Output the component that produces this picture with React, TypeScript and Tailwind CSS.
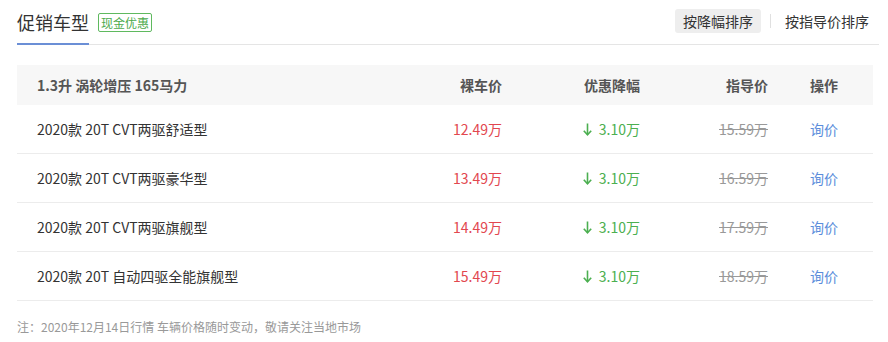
const rows = [
  { name: '2020款 20T CVT两驱舒适型', price: '12.49万', cut: '3.10万', guide: '15.59万' },
  { name: '2020款 20T CVT两驱豪华型', price: '13.49万', cut: '3.10万', guide: '16.59万' },
  { name: '2020款 20T CVT两驱旗舰型', price: '14.49万', cut: '3.10万', guide: '17.59万' },
  { name: '2020款 20T 自动四驱全能旗舰型', price: '15.49万', cut: '3.10万', guide: '18.59万' },
]

function DownArrow() {
  return (
    <svg width="9" height="13" viewBox="0 0 9 13" className="shrink-0">
      <path d="M4.5 0.5 V11.5" stroke="#4caf50" strokeWidth="1.6" fill="none" />
      <path d="M0.8 7.8 L4.5 11.8 L8.2 7.8" stroke="#4caf50" strokeWidth="1.6" fill="none" />
    </svg>
  )
}

export default function App() {
  return (
    <div className="w-[888px] h-[342px] bg-white text-[#333]" style={{ fontFamily: '"Microsoft YaHei", "Noto Sans CJK SC", sans-serif' }}>
      <div className="flex items-stretch h-[45px] ml-[17px] mr-[9px] border-b border-[#e5e5e5]">
        <div className="flex items-start pt-[8px]">
          <span className="text-[18px] leading-[28px] text-[#333] pb-[7px] border-b-2 border-[#6b8fd6] -mb-px">促销车型</span>
          <span className="ml-[9px] mt-[5px] h-[19px] px-[2px] border border-[#5fb95f] text-[#4caa4c] text-[12px] leading-[17px] rounded-[2px]">现金优惠</span>
        </div>
        <div className="flex-1" />
        <div className="flex items-start pt-[9px] pr-[5px] text-[14px] text-[#333]">
          <span className="h-[24px] leading-[24px] px-[8px] bg-[#eeeeee] rounded-[3px]">按降幅排序</span>
          <span className="mx-[9px] mt-[5px] w-px h-[14px] bg-[#e0e0e0]" />
          <span className="h-[24px] leading-[24px] px-[5px]">按指导价排序</span>
        </div>
      </div>

      <div className="ml-[17px] w-[856px] mt-[20px] text-[14px]">
        <div className="flex items-center h-[40px] bg-[#f7f7f7] font-bold text-[#555]">
          <div className="w-[375px] pl-[20px]">1.3升 涡轮增压 165马力</div>
          <div className="w-[110px] text-right">裸车价</div>
          <div className="w-[138px] text-right">优惠降幅</div>
          <div className="w-[128px] text-right">指导价</div>
          <div className="flex-1 pl-[42px]">操作</div>
        </div>
        {rows.map((r) => (
          <div key={r.name} className="flex items-center h-[49px] border-b border-[#ececec]">
            <div className="w-[375px] pl-[20px] text-[#333]">{r.name}</div>
            <div className="w-[110px] text-right text-[#e2474f]">{r.price}</div>
            <div className="w-[138px] flex justify-end items-center gap-[7px] text-[#4caf50]">
              <DownArrow />
              <span>{r.cut}</span>
            </div>
            <div className="w-[128px] text-right text-[#999] line-through">{r.guide}</div>
            <div className="flex-1 pl-[42px] text-[#5b8ddb]">询价</div>
          </div>
        ))}
      </div>

      <div className="ml-[17px] mt-[18px] text-[12px] leading-[16px] text-[#999]">
        注：2020年12月14日行情 车辆价格随时变动，敬请关注当地市场
      </div>
    </div>
  )
}
